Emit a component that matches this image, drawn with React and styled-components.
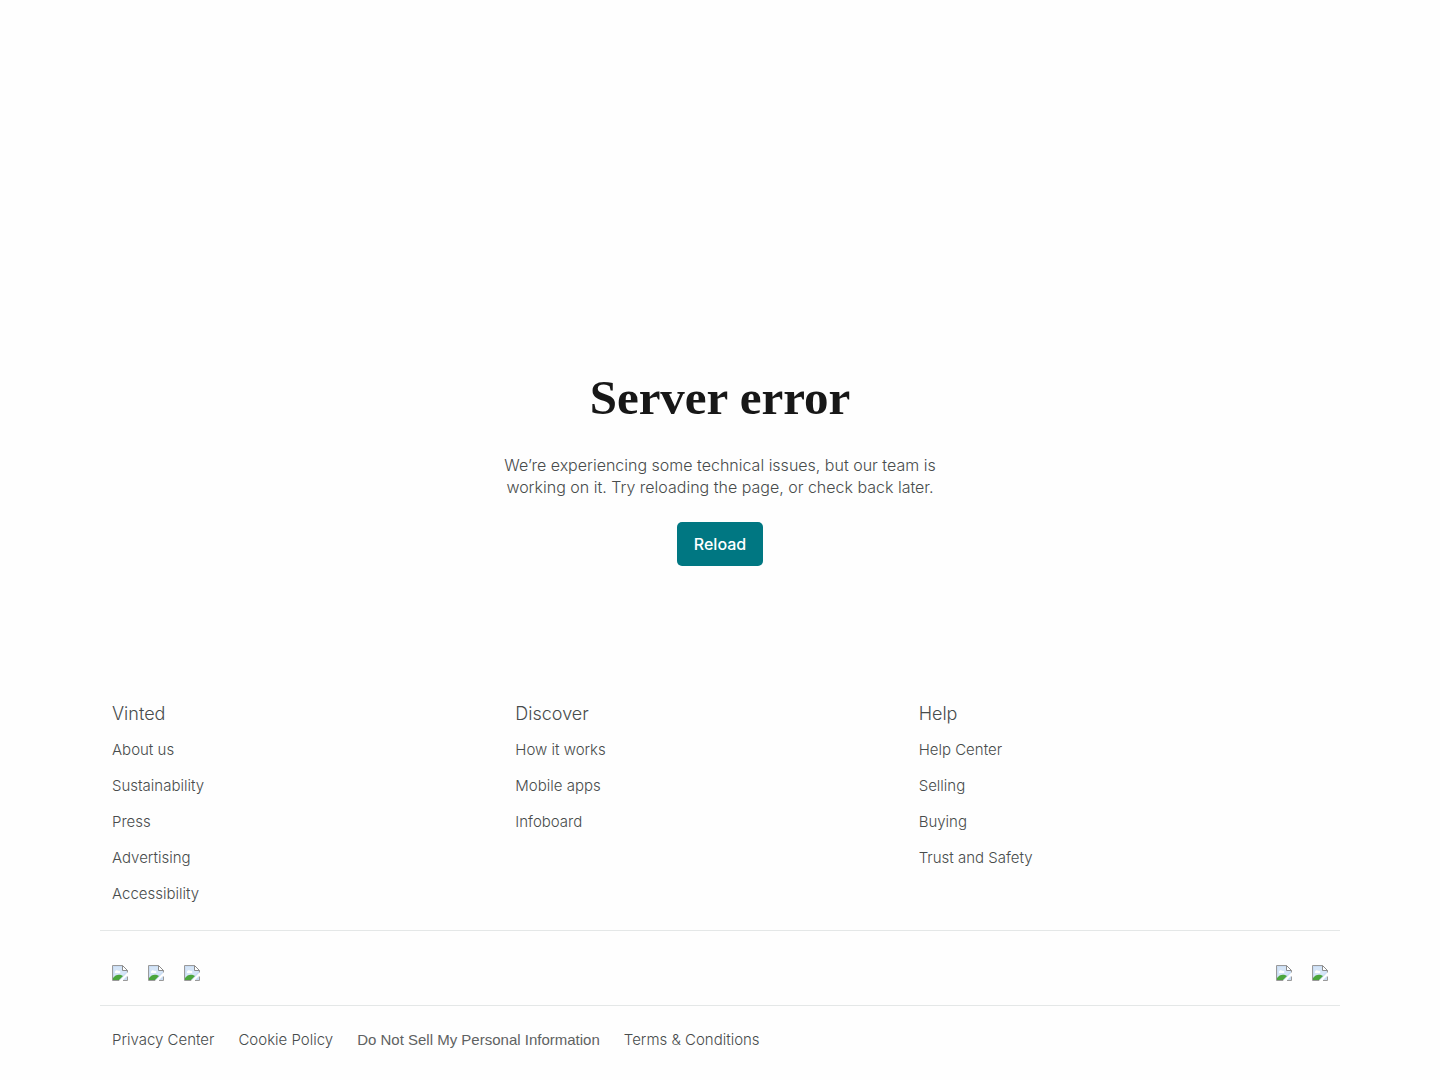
import React from 'react';
import styled, { createGlobalStyle } from 'styled-components';

const GlobalStyle = createGlobalStyle`
    *, *::before, *::after {
        box-sizing: border-box;
    }

    body {
        margin: 0;
        background: #fefefe;
        color: #484c4c;
        font-family: Inter, "Liberation Sans", sans-serif;
        font-size: 16px;
        font-weight: 300;
        line-height: 22px;
    }
`;

const Page = styled.div`
    display: flex;
    flex-direction: column;
    min-height: 100vh;
`;

const ErrorContent = styled.main`
    display: flex;
    flex-direction: column;
    flex: 1;
    align-items: center;
    justify-content: flex-end;
    padding: 48px 24px 112px;
    text-align: center;
`;

const ErrorTitle = styled.h1`
    margin: 0 0 26px;
    color: #171717;
    font-family: "Liberation Serif", serif;
    font-size: 49px;
    font-weight: 700;
    line-height: 60px;
`;

const ErrorText = styled.p`
    max-width: 450px;
    margin: 0 0 24px;
`;

const ReloadButton = styled.button`
    height: 44px;
    padding: 0 17px;
    border: 0;
    border-radius: 5px;
    background: #007782;
    color: #ffffff;
    font-family: inherit;
    font-size: 16px;
    font-weight: 500;
    cursor: pointer;
`;

const Footer = styled.footer`
    width: 100%;
    max-width: 1288px;
    margin: 0 auto;
    padding: 24px;
`;

const LinkColumns = styled.div`
    display: grid;
    grid-template-columns: repeat(3, 1fr);
    padding: 0 18px 18px 12px;
`;

const ColumnTitle = styled.h2`
    margin: 0 0 6px;
    font-size: 18px;
    font-weight: 300;
    line-height: 24px;
`;

const ColumnList = styled.ul`
    margin: 0;
    padding: 0;
    list-style: none;
`;

const ColumnItem = styled.li`
    display: flex;
    padding: 7px 0;
`;

const FooterLink = styled.a`
    color: inherit;
    font-size: 15px;
    text-decoration: none;
`;

const FooterRow = styled.div`
    display: flex;
    justify-content: ${({ $spread }) => ($spread ? 'space-between' : 'flex-start')};
    gap: 24px;
    padding: ${({ $spread }) => ($spread ? '33px 12px 25px' : '23px 12px 5px')};
    border-top: 1px solid #e4e7e7;
`;

const IconGroup = styled.div`
    display: flex;
    gap: 20px;
`;

const IconLink = styled.a`
    display: block;
    width: 16px;
    height: 16px;
`;

const PrivacyButton = styled.button`
    padding: 0;
    border: 0;
    background: none;
    color: #5e6262;
    font-family: "Liberation Sans", sans-serif;
    font-size: 15px;
    line-height: 22px;
    cursor: pointer;
`;

const columns = [
    { title: 'Vinted', links: ['About us', 'Sustainability', 'Press', 'Advertising', 'Accessibility'] },
    { title: 'Discover', links: ['How it works', 'Mobile apps', 'Infoboard'] },
    { title: 'Help', links: ['Help Center', 'Selling', 'Buying', 'Trust and Safety'] },
];

const socialLinks = ['Facebook', 'LinkedIn', 'Instagram'];
const storeLinks = ['App Store', 'Google Play'];

const ImageIcon = () => (
    <svg width="16" height="16" viewBox="0 0 16 16" aria-hidden="true">
        <path d="M1 1h10l4 4v10H1z" fill="#c9dcf3" />
        <path d="M2 2h8v4h4v1L7 14H2z" fill="#d5e5f7" />
        <path d="M3 7c0-2 3-2 3-1 2-1 3 1 2 2H3z" fill="#ffffff" />
        <path d="M1 15v-2c2-3 5-4 8-3l2 1-4 4z" fill="#4ba63c" />
        <path d="M.5 15.5V.5h10" fill="none" stroke="#9a9a9a" />
        <path d="M10.5.5l5 5h-5z" fill="#ffffff" stroke="#8b8b8b" />
        <path d="M15.5 5v3M.5 15.5h7M11 15.5h4.500v-4" fill="none" stroke="#9a9a9a" />
        <path d="M7 16l9-9v3l-6 6z" fill="#fefefe" />
    </svg>
);

const IconLinks = ({ items }) => (
    <IconGroup>
        {items.map((item) => (
            <IconLink href="#" aria-label={item} key={item}><ImageIcon /></IconLink>
        ))}
    </IconGroup>
);

const App = () => {
    return (
        <>
            <GlobalStyle />
            <Page>
                <ErrorContent>
                    <ErrorTitle>Server error</ErrorTitle>
                    <ErrorText>
                        We’re experiencing some technical issues, but our team is working on it. Try reloading the page, or check back later.
                    </ErrorText>
                    <ReloadButton type="button" onClick={() => window.location.reload()}>Reload</ReloadButton>
                </ErrorContent>
                <Footer>
                    <LinkColumns>
                        {columns.map((column) => (
                            <div key={column.title}>
                                <ColumnTitle>{column.title}</ColumnTitle>
                                <ColumnList>
                                    {column.links.map((link) => (
                                        <ColumnItem key={link}><FooterLink href="#">{link}</FooterLink></ColumnItem>
                                    ))}
                                </ColumnList>
                            </div>
                        ))}
                    </LinkColumns>
                    <FooterRow $spread>
                        <IconLinks items={socialLinks} />
                        <IconLinks items={storeLinks} />
                    </FooterRow>
                    <FooterRow>
                        <FooterLink href="#">Privacy Center</FooterLink>
                        <FooterLink href="#">Cookie Policy</FooterLink>
                        <PrivacyButton type="button">Do Not Sell My Personal Information</PrivacyButton>
                        <FooterLink href="#">Terms &amp; Conditions</FooterLink>
                    </FooterRow>
                </Footer>
            </Page>
        </>
    );
};

export default App;
